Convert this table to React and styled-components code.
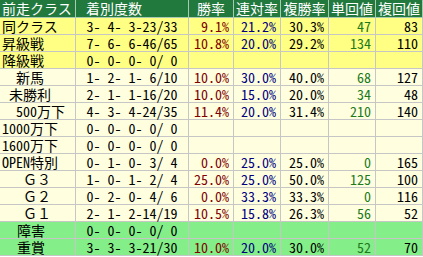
import React from "react";
import styled, { createGlobalStyle } from "styled-components";

const GlobalStyle = createGlobalStyle`
  html, body {
    margin: 0;
    padding: 0;
    background: #ffffff;
  }
  body {
    font-family: "Noto Sans CJK JP", "Liberation Sans", sans-serif;
  }
`;

const COLUMNS = "76px 113px 45px 47px 48px 47px 47px";

const TONES = {
  head: "#22793e",
  yellow: "#ffff84",
  cream: "#ffffe0",
  green: "#84ee88",
};

const INK = {
  label: "#000000",
  record: "#000000",
  win: "#800000",
  ren: "#000080",
  fuku: "#000000",
  tan: "#1d7a1d",
  fk: "#000000",
};

const Table = styled.div`
  width: 423px;
  font-family: "Noto Sans CJK JP", sans-serif;
  font-feature-settings: "hwid" 1;
  font-size: 14px;
`;

const Row = styled.div`
  display: grid;
  grid-template-columns: ${COLUMNS};
  height: ${(p) => (p.$head ? 18 : 17)}px;
  background: ${(p) => TONES[p.$tone]};
`;

const HeadCell = styled.div`
  box-sizing: border-box;
  border-right: 1px solid #a9c9b1;
  border-bottom: 1px solid #a9c9b1;
  color: #ffffff;
  line-height: 17px;
  white-space: pre;
  text-align: ${(p) => p.$align || "center"};
  padding-left: ${(p) => p.$pad || 0}px;
`;

const Cell = styled.div`
  box-sizing: border-box;
  border-right: 1px solid #c6c6c6;
  border-bottom: 1px solid #c6c6c6;
  line-height: 16px;
  white-space: pre;
  color: ${(p) => INK[p.$kind]};
  text-align: ${(p) => p.$align};
  padding-left: ${(p) => p.$indent || 0}px;
  padding-right: ${(p) => (p.$align === "right" ? 4 : 0)}px;
  font-feature-settings: ${(p) => (p.$wide ? "normal" : '"hwid" 1')};
`;

const headers = [
  { text: "前走クラス", align: "left", pad: 2 },
  { text: "着別度数", align: "left", pad: 10 },
  { text: "勝率" },
  { text: "連対率" },
  { text: "複勝率" },
  { text: "単回値" },
  { text: "複回値" },
];

const empty = ["", "", "", "", ""];

const rows = [
  { label: "同クラス", indent: 2, tone: "yellow", rec: "3- 4- 3-23/33", vals: ["9.1%", "21.2%", "30.3%", "47", "83"] },
  { label: "昇級戦", indent: 2, tone: "yellow", rec: "7- 6- 6-46/65", vals: ["10.8%", "20.0%", "29.2%", "134", "110"] },
  { label: "降級戦", indent: 2, tone: "yellow", rec: "0- 0- 0- 0/ 0", vals: empty },
  { label: "新馬", indent: 16, tone: "cream", rec: "1- 2- 1- 6/10", vals: ["10.0%", "30.0%", "40.0%", "68", "127"] },
  { label: "未勝利", indent: 9, tone: "cream", rec: "2- 1- 1-16/20", vals: ["10.0%", "15.0%", "20.0%", "34", "48"] },
  { label: "500万下", indent: 16, tone: "cream", rec: "4- 3- 4-24/35", vals: ["11.4%", "20.0%", "31.4%", "210", "140"] },
  { label: "1000万下", indent: 2, tone: "cream", rec: "0- 0- 0- 0/ 0", vals: empty },
  { label: "1600万下", indent: 2, tone: "cream", rec: "0- 0- 0- 0/ 0", vals: empty },
  { label: "OPEN特別", indent: 2, tone: "cream", rec: "0- 1- 0- 3/ 4", vals: ["0.0%", "25.0%", "25.0%", "0", "165"] },
  { label: "Ｇ３", wide: true, indent: 23, tone: "cream", rec: "1- 0- 1- 2/ 4", vals: ["25.0%", "25.0%", "50.0%", "125", "100"] },
  { label: "Ｇ２", wide: true, indent: 23, tone: "cream", rec: "0- 2- 0- 4/ 6", vals: ["0.0%", "33.3%", "33.3%", "0", "116"] },
  { label: "Ｇ１", wide: true, indent: 23, tone: "cream", rec: "2- 1- 2-14/19", vals: ["10.5%", "15.8%", "26.3%", "56", "52"] },
  { label: "障害", indent: 17, tone: "green", rec: "0- 0- 0- 0/ 0", vals: empty },
  { label: "重賞", indent: 17, tone: "green", rec: "3- 3- 3-21/30", vals: ["10.0%", "20.0%", "30.0%", "52", "70"] },
];

const valueKinds = ["win", "ren", "fuku", "tan", "fk"];

export default function App() {
  return (
    <>
      <GlobalStyle />
      <Table>
        <Row $head $tone="head">
          {headers.map((h) => (
            <HeadCell key={h.text} $align={h.align} $pad={h.pad}>
              {h.text}
            </HeadCell>
          ))}
        </Row>
        {rows.map((r) => (
          <Row key={r.label} $tone={r.tone}>
            <Cell $kind="label" $align="left" $indent={r.indent} $wide={r.wide}>
              {r.label}
            </Cell>
            <Cell $kind="record" $align="center">
              {r.rec}
            </Cell>
            {r.vals.map((v, i) => (
              <Cell key={valueKinds[i]} $kind={valueKinds[i]} $align="right">
                {v}
              </Cell>
            ))}
          </Row>
        ))}
      </Table>
    </>
  );
}
